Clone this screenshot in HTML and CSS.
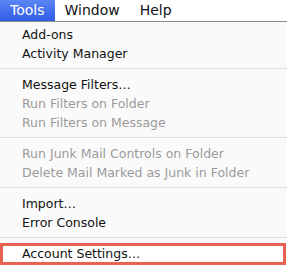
FILE: index.html
```html
<!DOCTYPE html>
<html lang="en">
<head>
  <meta charset="UTF-8">
  <title>Tools menu</title>
  <link rel="stylesheet" href="styles.css">
</head>
<body>
  <!-- menu bar -->
  <div class="menubar">
    <span class="title active">Tools</span>
    <span class="title">Window</span>
    <span class="title">Help</span>
  </div>
  <!-- dropdown -->
  <div class="menu">
    <div class="item">Add-ons</div>
    <div class="item">Activity Manager</div>
    <div class="sep"></div>
    <div class="item">Message Filters…</div>
    <div class="item off">Run Filters on Folder</div>
    <div class="item off">Run Filters on Message</div>
    <div class="sep"></div>
    <div class="item off">Run Junk Mail Controls on Folder</div>
    <div class="item off">Delete Mail Marked as Junk in Folder</div>
    <div class="sep"></div>
    <div class="item">Import…</div>
    <div class="item">Error Console</div>
    <div class="sep last"></div>
    <div class="item marked">Account Settings…</div>
  </div>
</body>
</html>
```

FILE: styles.css
```css
body {
  margin: 0;
  width: 287px;
  height: 265px;
  overflow: hidden;
  background: #fafafa;
  font-family: "DejaVu Sans", "Liberation Sans", sans-serif;
  font-size: 12.5px;
  color: #111;
}
.menubar {
  display: flex;
  height: 21px;
  background: #fff;
  border-bottom: 1px solid #8a8a8a;
}
.title {
  padding: 0 10px;
  line-height: 21px;
  font-size: 14px;
}
.title.active {
  color: #fff;
  background: linear-gradient(#5b86f5, #2e5ce8);
}
.menu {
  padding-top: 3px;
}
.item {
  height: 19px;
  line-height: 19px;
  padding-left: 22px;
  white-space: nowrap;
}
.item.off {
  color: #9a9a9a;
}
.sep {
  height: 1px;
  margin: 5px 0 6px;
  background: #dcdcdc;
}
.sep.last {
  margin-bottom: 5px;
}
.item.marked {
  height: 16px;
  line-height: 16px;
  padding-left: 19px;
  margin-right: 1px;
  border: 3px solid #e8604f;
  background: #fff;
}
```
